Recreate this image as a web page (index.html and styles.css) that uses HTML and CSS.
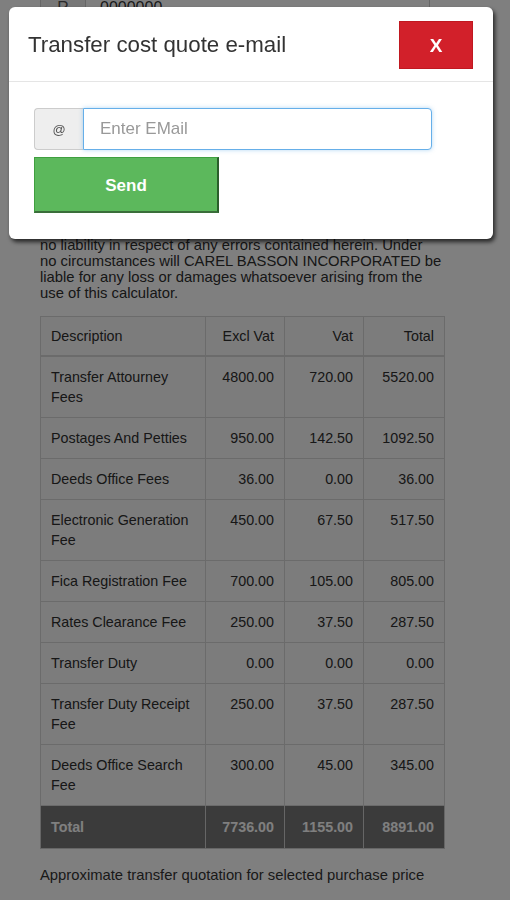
FILE: index.html
```html
<!DOCTYPE html>
<html>
<head>
<meta charset="utf-8">
<link rel="stylesheet" href="styles.css">
</head>
<body>
<div class="page">
  <div class="price-group">
    <span class="price-addon">R</span>
    <span class="price-input">0000000</span>
  </div>
  <div class="hidden-fields">
    <label class="field-label">Purchase Price</label>
    <div class="field-row">Calculate</div>
    <p class="disclaimer">The figures produced by this calculator are estimates only and are provided for information purposes. Actual costs may vary depending on the particulars of each transaction. CAREL BASSON INCORPORATED accepts</p>
  </div>
  <p class="disclaimer">no liability in respect of any errors contained herein. Under<br>no circumstances will CAREL BASSON INCORPORATED be liable for any loss or damages whatsoever arising from the use of this calculator.</p>

  <table class="cost-table">
    <thead>
      <tr><th class="desc">Description</th><th class="num">Excl Vat</th><th class="num">Vat</th><th class="num">Total</th></tr>
    </thead>
    <tbody>
      <tr><td class="desc">Transfer Attourney Fees</td><td class="num">4800.00</td><td class="num">720.00</td><td class="num">5520.00</td></tr>
      <tr><td class="desc">Postages And Petties</td><td class="num">950.00</td><td class="num">142.50</td><td class="num">1092.50</td></tr>
      <tr><td class="desc">Deeds Office Fees</td><td class="num">36.00</td><td class="num">0.00</td><td class="num">36.00</td></tr>
      <tr><td class="desc">Electronic Generation Fee</td><td class="num">450.00</td><td class="num">67.50</td><td class="num">517.50</td></tr>
      <tr><td class="desc">Fica Registration Fee</td><td class="num">700.00</td><td class="num">105.00</td><td class="num">805.00</td></tr>
      <tr><td class="desc">Rates Clearance Fee</td><td class="num">250.00</td><td class="num">37.50</td><td class="num">287.50</td></tr>
      <tr><td class="desc">Transfer Duty</td><td class="num">0.00</td><td class="num">0.00</td><td class="num">0.00</td></tr>
      <tr><td class="desc">Transfer Duty Receipt Fee</td><td class="num">250.00</td><td class="num">37.50</td><td class="num">287.50</td></tr>
      <tr><td class="desc">Deeds Office Search Fee</td><td class="num">300.00</td><td class="num">45.00</td><td class="num">345.00</td></tr>
    </tbody>
    <tfoot>
      <tr><td class="desc">Total</td><td class="num">7736.00</td><td class="num">1155.00</td><td class="num">8891.00</td></tr>
    </tfoot>
  </table>
  <p class="note">Approximate transfer quotation for selected purchase price</p>
</div>

<div class="backdrop"></div>
<div class="modal">
  <div class="modal-header">
    <h4 class="modal-title">Transfer cost quote e-mail</h4>
    <button class="btn-close">X</button>
  </div>
  <div class="modal-body">
    <div class="email-group">
      <span class="email-addon">@</span>
      <input class="email-input" type="text" placeholder="Enter EMail">
    </div>
    <button class="btn-send">Send</button>
  </div>
</div>
</body>
</html>
```
FILE: styles.css
```css
html, body {
  margin: 0;
  padding: 0;
  background: #fff;
  font-family: "Liberation Sans", Arial, sans-serif;
  color: #333;
  overflow: hidden;
}

.page {
  width: 404px;
  margin-left: 40px;
  padding-bottom: 40px;
}

.price-group {
  display: flex;
  height: 42px;
  margin-top: -13px;
  width: 390px;
  font-size: 16px;
}
.price-addon {
  width: 44px;
  border: 1px solid #ccc;
  background: #eee;
  display: flex;
  align-items: center;
  justify-content: center;
  color: #555;
}
.price-input {
  flex: 1;
  border: 1px solid #ccc;
  border-left: none;
  display: flex;
  align-items: center;
  padding-left: 14px;
}

.hidden-fields {
  height: 208px;
  overflow: hidden;
  padding-top: 10px;
  box-sizing: border-box;
}
.field-label {
  display: block;
  font-size: 14px;
  font-weight: bold;
  margin-bottom: 8px;
}
.field-row {
  font-size: 14px;
  margin-bottom: 12px;
}

.disclaimer {
  margin: 0;
  width: 404px;
  font-size: 14.8px;
  line-height: 16px;
  color: #2e2e2e;
}

.cost-table {
  margin-top: 15px;
  width: 405px;
  border-collapse: collapse;
  font-size: 14.3px;
  line-height: 20px;
  color: #2e2e2e;
  background: #f8f8f8;
}
.cost-table th,
.cost-table td {
  border: 1px solid #d6d6d6;
  padding: 10px;
  vertical-align: top;
  font-weight: normal;
}
.cost-table thead th {
  border-bottom-width: 2px;
  padding-top: 9px;
  padding-bottom: 9px;
}
.cost-table .desc {
  text-align: left;
  width: 144px;
}
.cost-table .num {
  text-align: right;
}
.cost-table th.num:nth-child(2),
.cost-table td.num:nth-child(2) { width: 58px; }
.cost-table th.num:nth-child(3),
.cost-table td.num:nth-child(3) { width: 58px; }
.cost-table tfoot td {
  background: #777;
  color: #fff;
  font-weight: bold;
  padding-top: 11px;
  padding-bottom: 11px;
  border-color: #ccc;
}

.note {
  margin: 16px 0 0 0;
  font-size: 14.8px;
  line-height: 20px;
}

.backdrop {
  position: fixed;
  inset: 0;
  background: rgba(0, 0, 0, 0.5);
}

.modal {
  position: fixed;
  top: 7px;
  left: 9px;
  width: 484px;
  background: #fff;
  border-radius: 6px;
  box-shadow: 2px 3px 4px rgba(0, 0, 0, 0.7);
}
.modal-header {
  display: flex;
  align-items: center;
  justify-content: space-between;
  padding: 14px 20px 12px 19px;
  border-bottom: 1px solid #e5e5e5;
}
.modal-title {
  margin: 0;
  font-size: 22.3px;
  font-weight: normal;
  color: #333;
  line-height: 1.1;
}
.btn-close {
  width: 74px;
  height: 48px;
  background: #d2202a;
  border: 1px solid #c01820;
  color: #fff;
  font-family: "Liberation Sans", Arial, sans-serif;
  font-size: 19px;
  font-weight: bold;
  padding: 2px 0 0 0;
}
.modal-body {
  padding: 26px 25px;
  display: flex;
  flex-direction: column;
  gap: 7px;
}
.email-group {
  display: flex;
  width: 398px;
  height: 42px;
}
.email-addon {
  width: 48px;
  background: #eee;
  border: 1px solid #ccc;
  border-right: none;
  border-radius: 4px 0 0 4px;
  display: flex;
  align-items: center;
  justify-content: center;
  font-size: 13px;
  color: #555;
}
.email-input {
  flex: 1;
  min-width: 0;
  border: 1px solid #66afe9;
  border-radius: 0 4px 4px 0;
  box-shadow: 0 0 4px rgba(102, 175, 233, 0.5);
  padding: 0 16px;
  font-family: "Liberation Sans", Arial, sans-serif;
  font-size: 17px;
  color: #555;
  outline: none;
}
.email-input::placeholder {
  color: #999;
}
.btn-send {
  width: 185px;
  height: 56px;
  background: #5cb85c;
  border: 1px solid #3f9f3f;
  border-right: 2px solid #2b5e2b;
  border-bottom: 2px solid #3a6e3a;
  color: #fff;
  font-family: "Liberation Sans", Arial, sans-serif;
  font-size: 17px;
  font-weight: bold;
  padding: 3px 0 0 0;
}
```
